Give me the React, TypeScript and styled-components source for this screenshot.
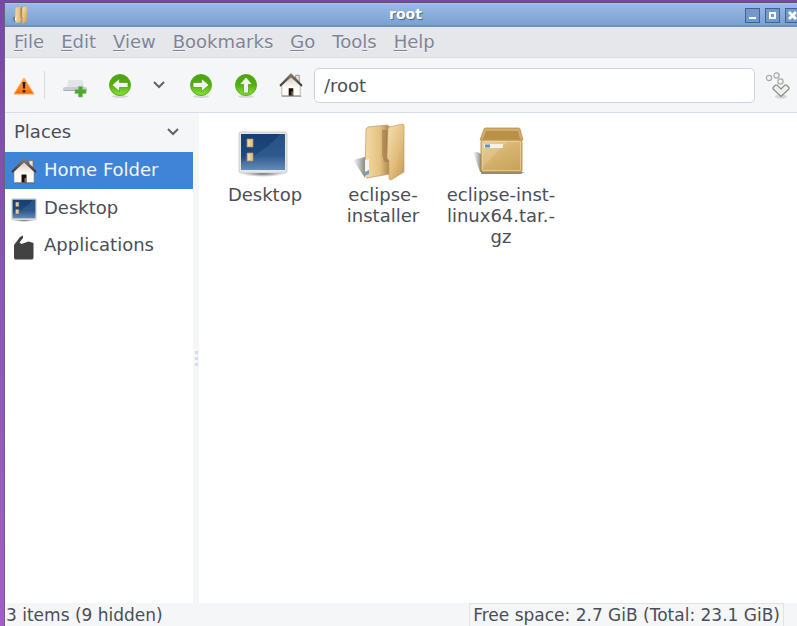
import React from "react";
import styled, { createGlobalStyle } from "styled-components";

const GlobalStyle = createGlobalStyle`
  * { box-sizing: border-box; }
  html, body { margin: 0; overflow: hidden; }
  body, button, input {
    font-family: "DejaVu Sans", sans-serif;
    font-size: 18px;
    color: #4b4e57;
  }
  button { border: 0; padding: 0; background: none; cursor: default; }
  svg { display: block; flex: none; }
`;

const Backdrop = styled.div`
  height: 100vh;
  padding: 2px 0 0 4px;
  overflow: hidden;
  background: linear-gradient(#7848a6, #8a55b6 45%, #a35ec8);
`;

/* The window reaches a little past the right edge of the screen. */
const Window = styled.main`
  display: flex;
  flex-direction: column;
  height: 100%;
  margin-right: -8px;
  border-left: 1px solid #6c6080;
  border-top: 1px solid #50586c;
  background: #f5f6f7;
`;

const TitleBar = styled.header`
  display: grid;
  grid-template-columns: 1fr auto 1fr;
  align-items: center;
  height: 24px;
  padding: 0 5px 0 6px;
  border-top: 1px solid #a9c4e6;
  border-bottom: 2px solid #6b91be;
  background: linear-gradient(#9abae3, #7aa1d2);
`;

const Title = styled.h1`
  margin: 0;
  padding-bottom: 2px;
  font-size: 14px;
  line-height: 20px;
  color: #fff;
  text-shadow: 1px 1px 1px #4b6688;
`;

const WindowControls = styled.div`
  display: flex;
  justify-content: flex-end;
  gap: 5px;
`;

const ControlButton = styled.button`
  width: 15px;
  height: 15px;
  border: 1px solid #3f6492;
  background: #7299c9;
`;

const MenuBar = styled.nav`
  display: flex;
  align-items: center;
  gap: 17px;
  height: 31px;
  padding: 0 9px;
  border-bottom: 1px solid #d9dbe0;
  background: #e6e7ea;
`;

const MenuButton = styled.button`
  line-height: 24px;
  color: #7e8597;
  text-shadow: 0 1px 0 #f4f5f8;
`;

const Mnemonic = styled.span`
  text-decoration: underline;
  text-decoration-thickness: 1px;
  text-underline-offset: 2px;
`;

const ToolBar = styled.div`
  display: flex;
  align-items: center;
  height: 55px;
  padding: 0 15px 0 7px;
  border-bottom: 1px solid #d6dce8;
`;

const ToolButton = styled.button<{ $gap?: number }>`
  display: flex;
  margin-right: ${(p) => p.$gap ?? 0}px;
`;

const Divider = styled.span`
  width: 1px;
  height: 28px;
  margin: 0 17px 0 8px;
  background: #d8dbe1;
`;

const LocationInput = styled.input`
  flex: 1;
  min-width: 0;
  height: 35px;
  margin: 0 10px 0 11px;
  padding: 0 9px;
  border: 1px solid #cbd3e6;
  border-radius: 5px;
  outline: 0;
  background: #fff;
`;

const Body = styled.div`
  display: flex;
  flex: 1;
  min-height: 0;
`;

const Sidebar = styled.aside`
  flex: none;
  width: 188px;
  background: #fff;
`;

const PlacesHeader = styled.button`
  display: flex;
  align-items: center;
  justify-content: space-between;
  width: 100%;
  height: 39px;
  padding: 0 13px 2px 9px;
  background: #f5f6f7;
`;

const PlaceRow = styled.button<{ $selected?: boolean }>`
  display: flex;
  align-items: center;
  gap: 7px;
  width: 100%;
  height: 37px;
  padding: 0 7px 0 6px;
  line-height: 22px;
  color: ${(p) => (p.$selected ? "#f1f6fd" : "inherit")};
  background: ${(p) => (p.$selected ? "#4084d8" : "transparent")};

  span { padding-bottom: 2px; }
  & + & { padding-top: 2px; }
`;

const Splitter = styled.div`
  display: flex;
  flex: none;
  flex-direction: column;
  align-items: center;
  justify-content: center;
  gap: 3px;
  width: 6px;
  background: #f5f6f7;
`;

const Grip = styled.i`
  width: 3px;
  height: 3px;
  background: #d5daf0;
`;

const FileList = styled.ul`
  display: flex;
  flex: 1;
  flex-wrap: wrap;
  align-content: flex-start;
  margin: 0;
  padding: 9px 7px;
  list-style: none;
  background: #fff;
`;

const FileItem = styled.li`
  width: 118px;
`;

const FileButton = styled.button`
  display: flex;
  flex-direction: column;
  align-items: center;
  gap: 2px;
  width: 100%;
  line-height: 21px;
  white-space: pre-line;
`;

const StatusBar = styled.footer`
  display: flex;
  align-items: stretch;
  justify-content: space-between;
  flex: none;
  height: 23px;
  padding: 0 21px 0 1px;
  font-size: 17px;
  line-height: 24px;
  white-space: nowrap;
`;

const FreeSpace = styled.span`
  padding: 0 3px;
  border: 1px solid #e2e3e6;
  border-bottom: 0;
  line-height: 22px;
`;

function HomeIcon({ size = 26 }: { size?: number }) {
  return (
    <svg width={size} height={size} viewBox="0 0 26 26" aria-hidden="true">
      <defs>
        <linearGradient id="wall" x2="0" y2="1">
          <stop stopColor="#cfc8c0" />
          <stop offset=".6" stopColor="#fffdf8" />
        </linearGradient>
        <linearGradient id="roof" x2="0" y2="1">
          <stop stopColor="#8b8078" />
          <stop offset="1" stopColor="#3c322d" />
        </linearGradient>
      </defs>
      <path d="M3 24.500h21v1H3z" fill="#6d6761" />
      <path d="M18 2.500h4v7l-4-3z" fill="#e8e2da" stroke="#75695f" strokeWidth=".7" />
      <path d="M3 13.500 13 3l10 10.500v11H3z" fill="url(#wall)" stroke="#8d857d" strokeWidth=".6" />
      <path d="m13 0 12.500 13-1 2L13 4.500 1.500 15l-1-2z" fill="url(#roof)" />
      <path d="M10.500 16.500h5v8h-5z" fill="#17120f" />
      <path d="M13.500 20h1.500v4h-1.500z" fill="#8f7750" />
    </svg>
  );
}

function FolderIcon({ size = 58 }: { size?: number }) {
  return (
    <svg width={size} height={size} viewBox="0 0 58 58" aria-hidden="true">
      <defs>
        <linearGradient id="folderBack">
          <stop stopColor="#f3daa4" />
          <stop offset=".6" stopColor="#e4c181" />
          <stop offset="1" stopColor="#a9834b" />
        </linearGradient>
        <linearGradient id="folderFront" x2=".9" y2="1">
          <stop stopColor="#f7e1b2" />
          <stop offset=".6" stopColor="#e2bd7c" />
          <stop offset="1" stopColor="#c49a5b" />
        </linearGradient>
        <linearGradient id="folderShade">
          <stop stopColor="#555" stopOpacity="0" />
          <stop offset="1" stopColor="#555" stopOpacity=".7" />
        </linearGradient>
      </defs>
      <path d="M1 37q8-2 12-3v21z" fill="url(#folderShade)" />
      <path d="m14 6 2-2 19-2 3 2v47l-23 4-2-2z" fill="url(#folderBack)" stroke="#bd985d" strokeWidth=".7" />
      <path d="M30 7h7v32h-5l-2-7z" fill="#84653a" opacity=".4" />
      <path d="m36 6 1-2 14-3 1 1v47L39 57l-2-1V38l-2-3z" fill="url(#folderFront)" stroke="#c39d61" strokeWidth=".7" />
      <path d="m13 37 4-1v14l-4 4z" fill="#f5f4ef" />
      <path d="m13 49 4-2v4l-4 2z" fill="#6f9fd0" />
    </svg>
  );
}

function DesktopIcon({ size = 50 }: { size?: number }) {
  return (
    <svg width={size} height={size} viewBox="0 0 50 50" aria-hidden="true">
      <defs>
        <linearGradient id="screen" x2="0" y2="1">
          <stop stopColor="#163f73" />
          <stop offset=".6" stopColor="#1e4a7e" />
          <stop offset="1" stopColor="#6087b3" />
        </linearGradient>
        <radialGradient id="standShadow">
          <stop stopColor="#3c3c3c" />
          <stop offset="1" stopColor="#777" stopOpacity="0" />
        </radialGradient>
      </defs>
      <ellipse cx="25" cy="46" rx="23" ry="4" fill="url(#standShadow)" />
      <rect x="1" y="5" width="48" height="41" rx="2" fill="#e3e5e6" stroke="#c3c6c8" strokeWidth=".8" />
      <rect x="3" y="7" width="44" height="36" fill="url(#screen)" />
      <path d="M3 43V36Q30 22 42 7h5v36z" fill="#7aa3d0" opacity=".18" />
      <path d="M9 12h6v8H9zM9 26h6v8H9z" fill="#e3c68d" stroke="#b2925b" strokeWidth=".7" />
      <path d="M11 13v6m0 8v6" stroke="#fae8bd" />
    </svg>
  );
}

function PackageIcon() {
  return (
    <svg width="54" height="58" viewBox="0 0 54 58" aria-hidden="true">
      <defs>
        <linearGradient id="boxFront" x2=".6" y2="1">
          <stop stopColor="#e5cb8e" />
          <stop offset=".5" stopColor="#d7b570" />
          <stop offset="1" stopColor="#c9a65e" />
        </linearGradient>
        <linearGradient id="boxShade">
          <stop stopColor="#777" stopOpacity="0" />
          <stop offset="1" stopColor="#555" stopOpacity=".8" />
        </linearGradient>
      </defs>
      <path d="M1 29q5-1 9 3v17H8z" fill="url(#boxShade)" />
      <path d="M9 49h43l-3 2H9z" fill="#8c8c8c" />
      <path d="M12 6q0-1 2-1h32q2 0 2 1l3 11H8z" fill="#d0ad68" stroke="#b08740" strokeWidth=".7" />
      <path d="M14 8h32l2 8H11z" fill="#b89048" />
      <rect x="9" y="17" width="41" height="32" rx="2" fill="url(#boxFront)" stroke="#b08740" strokeWidth=".8" />
      <rect x="10.500" y="18.500" width="38" height="29" rx="1" fill="none" stroke="#f0dca9" opacity=".6" />
      <path d="M11 19h24L11 44z" fill="#fff" opacity=".14" />
      <rect x="12" y="21" width="19" height="4" rx="1" fill="#f4f2e8" />
      <path d="M13 21.500h5v3h-5z" fill="#638fbd" />
    </svg>
  );
}

function WarningIcon() {
  return (
    <svg width="24" height="24" viewBox="0 0 24 24" aria-hidden="true">
      <defs>
        <linearGradient id="warning" x2="0" y2="1">
          <stop stopColor="#ffb153" />
          <stop offset="1" stopColor="#f36a08" />
        </linearGradient>
      </defs>
      <path d="M12 5 22 21H2z" fill="url(#warning)" stroke="#f9a562" strokeLinejoin="round" />
      <path d="M10.500 9h3l-.5 6.500h-2zM10.700 17h2.600v2.600h-2.600z" fill="#30211a" />
    </svg>
  );
}

function NewTabIcon() {
  return (
    <svg width="26" height="26" viewBox="0 0 26 26" aria-hidden="true">
      <path d="M6 9q0-1 1-1h12q2 0 2 2l1 5H5z" fill="#e3e5e8" />
      <path d="M3 15h20q2 0 2 2v2H1v-2q0-2 2-2z" fill="#c9cdd6" />
      <path d="M2 18.500h23" stroke="#a9afbd" />
      <path d="M16.500 14.500h4v3h3.500v4h-3.500V25h-4v-3.500H13v-4h3.500z" fill="#4fa72e" stroke="#81bd70" strokeWidth=".6" strokeLinejoin="round" />
    </svg>
  );
}

function ArrowIcon({ turn }: { turn: number }) {
  return (
    <svg width="24" height="26" viewBox="0 0 24 26" aria-hidden="true">
      <defs>
        <linearGradient id="greenBall" x2="0" y2="1">
          <stop stopColor="#4ca20e" />
          <stop offset=".5" stopColor="#51b20a" />
          <stop offset="1" stopColor="#8be33c" />
        </linearGradient>
      </defs>
      <ellipse cx="12" cy="24.500" rx="8" ry="1.500" fill="#d5d8d6" />
      <circle cx="12" cy="13" r="10.500" fill="url(#greenBall)" stroke="#55ab1c" />
      <path
        d="m4 13 7.500-6.500v4H20v5h-8.500v4z"
        fill="#f1f2ee"
        stroke="#3f8b15"
        strokeWidth=".6"
        transform={`rotate(${turn} 12 13)`}
      />
    </svg>
  );
}

function Chevron() {
  return (
    <svg width="14" height="10" viewBox="0 0 14 10" fill="none" stroke="#5f646e" strokeWidth="2" aria-hidden="true">
      <path d="m2 2 5 5 5-5" />
    </svg>
  );
}

function JumpIcon() {
  return (
    <svg width="25" height="28" viewBox="0 0 25 28" fill="none" stroke="#a9aaa6" strokeWidth="1.200" aria-hidden="true">
      <ellipse cx="16" cy="25.500" rx="6" ry="2" fill="#d5d6d5" stroke="none" />
      <circle cx="4" cy="7" r="2.600" />
      <circle cx="11.500" cy="4.500" r="2.600" />
      <circle cx="15.500" cy="10.500" r="2.600" />
      <path d="M8 16.500 10.500 14h1.500l4 4 4-4h1.500l2.500 2.500V18l-8 7.500L8 18z" fill="#eeeeed" stroke="#888986" />
    </svg>
  );
}

function BagIcon() {
  return (
    <svg width="26" height="30" viewBox="0 0 26 30" fill="#424242" aria-hidden="true">
      <path d="m3 14 6-8 3-1.500v2.500L8.500 11.500l2 1.500 7-2.500 5 1.500V27l-1 1.500H4L3 27z" />
    </svg>
  );
}

const menus = [
  ["", "F", "ile"],
  ["", "E", "dit"],
  ["", "V", "iew"],
  ["", "B", "ookmarks"],
  ["", "G", "o"],
  ["Too", "l", "s"],
  ["", "H", "elp"],
];

const IconSlot = styled.span`
  display: flex;
  align-items: center;
  justify-content: center;
  height: 60px;
  padding-right: 5px;
`;

const files = [
  { name: "Desktop", icon: <DesktopIcon /> },
  { name: "eclipse-\ninstaller", icon: <FolderIcon /> },
  { name: "eclipse-inst-\nlinux64.tar.-\ngz", icon: <PackageIcon /> },
];

export default function App() {
  return (
    <>
      <GlobalStyle />
      <Backdrop>
        <Window>
          <TitleBar>
            <FolderIcon size={18} />
            <Title>root</Title>
            <WindowControls>
              <ControlButton aria-label="Minimize">
                <svg width="13" height="13" stroke="#fff" strokeWidth="2"><path d="M3 9h7" /></svg>
              </ControlButton>
              <ControlButton aria-label="Maximize">
                <svg width="13" height="13" fill="none" stroke="#fff" strokeWidth="2"><path d="M4 4h5v5H4z" /></svg>
              </ControlButton>
              <ControlButton aria-label="Close">
                <svg width="13" height="13" stroke="#fff" strokeWidth="3"><path d="m3 3 7 7m0-7-7 7" /></svg>
              </ControlButton>
            </WindowControls>
          </TitleBar>
          <MenuBar>
            {menus.map(([before, key, after]) => (
              <MenuButton key={before + key + after}>
                {before}<Mnemonic>{key}</Mnemonic>{after}
              </MenuButton>
            ))}
          </MenuBar>
          <ToolBar>
            <ToolButton aria-label="Running as administrator"><WarningIcon /></ToolButton>
            <Divider />
            <ToolButton $gap={20} aria-label="New tab"><NewTabIcon /></ToolButton>
            <ToolButton $gap={20} aria-label="Back"><ArrowIcon turn={0} /></ToolButton>
            <ToolButton $gap={23} aria-label="History"><Chevron /></ToolButton>
            <ToolButton $gap={21} aria-label="Forward"><ArrowIcon turn={180} /></ToolButton>
            <ToolButton $gap={21} aria-label="Up"><ArrowIcon turn={90} /></ToolButton>
            <ToolButton aria-label="Home"><HomeIcon size={24} /></ToolButton>
            <LocationInput aria-label="Location" defaultValue="/root" />
            <ToolButton aria-label="Go to location"><JumpIcon /></ToolButton>
          </ToolBar>
          <Body>
            <Sidebar>
              <PlacesHeader>Places<Chevron /></PlacesHeader>
              <PlaceRow $selected><HomeIcon /><span>Home Folder</span></PlaceRow>
              <PlaceRow><DesktopIcon size={26} /><span>Desktop</span></PlaceRow>
              <PlaceRow><BagIcon /><span>Applications</span></PlaceRow>
            </Sidebar>
            <Splitter><Grip /><Grip /><Grip /></Splitter>
            <FileList>
              {files.map((file) => (
                <FileItem key={file.name}>
                  <FileButton>
                    <IconSlot>{file.icon}</IconSlot>
                    <span>{file.name}</span>
                  </FileButton>
                </FileItem>
              ))}
            </FileList>
          </Body>
          <StatusBar>
            <span>3 items (9 hidden)</span>
            <FreeSpace>Free space: 2.7 GiB (Total: 23.1 GiB)</FreeSpace>
          </StatusBar>
        </Window>
      </Backdrop>
    </>
  );
}
